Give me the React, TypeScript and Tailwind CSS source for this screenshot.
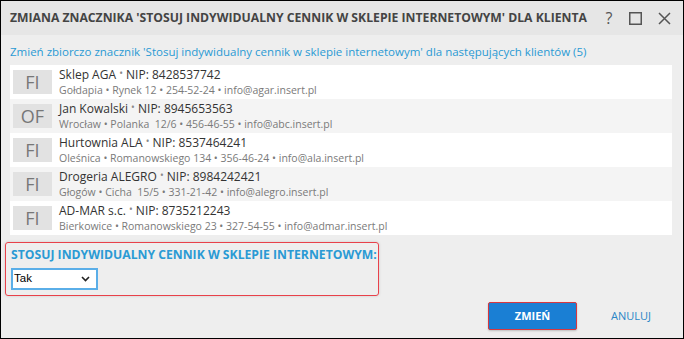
const clients = [
  { tag: "FI", name: "Sklep AGA", nip: "8428537742", addr: ["Gołdapia", "Rynek 12", "254-52-24", "info@agar.insert.pl"] },
  { tag: "OF", name: "Jan Kowalski", nip: "8945653563", addr: ["Wrocław", "Polanka  12/6", "456-46-55", "info@abc.insert.pl"] },
  { tag: "FI", name: "Hurtownia ALA", nip: "8537464241", addr: ["Oleśnica", "Romanowskiego 134", "356-46-24", "info@ala.insert.pl"] },
  { tag: "FI", name: "Drogeria ALEGRO", nip: "8984242421", addr: ["Głogów", "Cicha  15/5", "331-21-42", "info@alegro.insert.pl"] },
  { tag: "FI", name: "AD-MAR s.c.", nip: "8735212243", addr: ["Bierkowice", "Romanowskiego 23", "327-54-55", "info@admar.insert.pl"] },
];

export default function App() {
  return (
    <div
      className="w-[684px] h-[339px] border border-black bg-[#eeeeee] flex flex-col text-[#333] overflow-hidden"
      style={{ fontFamily: "'Open Sans', 'Noto Sans', sans-serif" }}
    >
      {/* title bar */}
      <div className="h-[34px] shrink-0 bg-[#e6e6e6] flex items-center pl-[9px] pr-[12px]">
        <h1 className="flex-1 text-[12.2px] font-bold text-[#444] whitespace-nowrap">
          ZMIANA ZNACZNIKA 'STOSUJ INDYWIDUALNY CENNIK W SKLEPIE INTERNETOWYM' DLA KLIENTA
        </h1>
        <div className="flex items-center gap-[14px] text-[#555]">
          <span className="text-[16px] leading-none w-[12px] text-center">?</span>
          <svg width="13" height="13" viewBox="0 0 13 13">
            <rect x="0.75" y="0.75" width="11.5" height="11.5" fill="none" stroke="#555" strokeWidth="1.5" />
          </svg>
          <svg width="13" height="13" viewBox="0 0 13 13" className="ml-[2px]">
            <path d="M1 1 L12 12 M12 1 L1 12" stroke="#555" strokeWidth="1.5" />
          </svg>
        </div>
      </div>

      {/* body */}
      <div className="flex-1 flex flex-col px-[9px] pt-[8px]">
        <p className="text-[11.5px] text-[#2a9ad4] whitespace-nowrap leading-[18px]">
          Zmień zbiorczo znacznik 'Stosuj indywidualny cennik w sklepie internetowym' dla następujących klientów (5)
        </p>

        <div className="mt-[4px] mr-[2px] bg-white flex flex-col">
          {clients.map((c, i) => (
            <div
              key={c.name}
              className={`h-[34px] flex items-center pl-[3px] ${i % 2 === 1 ? "bg-[#f4f4f4]" : "bg-white"}`}
            >
              <div className="w-[39px] h-[24px] bg-[#e2e2e2] text-[#777] text-[18px] flex items-center justify-center leading-none">
                {c.tag}
              </div>
              <div className="ml-[7px] flex flex-col">
                <div className="text-[12px] leading-[16px] text-[#333] whitespace-nowrap">
                  {c.name} <span className="text-[#888] text-[10px] relative -top-[2px]">•</span> NIP: {c.nip}
                </div>
                <div className="text-[10.5px] leading-[15px] text-[#7a7a7a] whitespace-pre">
                  {c.addr.join(" • ")}
                </div>
              </div>
            </div>
          ))}
        </div>

        <div className="mt-[7px] -ml-[5px] w-[374px] h-[54px] border-[1.5px] border-[#e8414a] rounded-[3px] px-[5px] pt-[3px] shadow-[0_0_3px_rgba(0,0,0,0.15)]">
          <div className="text-[12.2px] font-bold text-[#2a9ad4] whitespace-nowrap leading-[18px]">
            STOSUJ INDYWIDUALNY CENNIK W SKLEPIE INTERNETOWYM:
          </div>
          <div className="mt-[4px] w-[87px] h-[22px] bg-white border-2 border-[#5aaee8] flex items-center justify-between pl-[1px] pr-[6px]">
            <span className="text-[11.5px] text-black" style={{ fontFamily: "'Liberation Sans', sans-serif" }}>Tak</span>
            <svg width="9" height="6" viewBox="0 0 9 6">
              <path d="M1 1 L4.5 4.5 L8 1" fill="none" stroke="#222" strokeWidth="1.6" />
            </svg>
          </div>
        </div>

        <div className="mt-[6px] flex items-center justify-end pr-[23px] gap-[34px]">
          <button className="w-[89px] h-[28px] bg-[#1a7fd4] border-[1.5px] border-[#d7373f] rounded-[2px] text-white text-[11px] font-bold shadow-[0_1px_2px_rgba(0,0,0,0.2)]">
            ZMIEŃ
          </button>
          <button className="text-[11px] text-[#2a86c6]">ANULUJ</button>
        </div>
      </div>
    </div>
  );
}
